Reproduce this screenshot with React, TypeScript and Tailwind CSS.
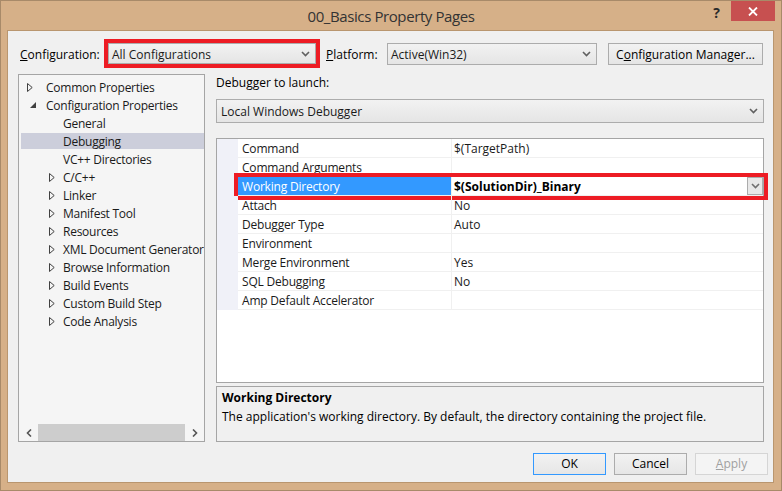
import React from "react";

function ChevronDown({ color = "#606060" }: { color?: string }) {
  return (
    <svg width="9" height="6" viewBox="0 0 9 6">
      <path d="M1 1 L4.5 4.5 L8 1" fill="none" stroke={color} strokeWidth="1.6" />
    </svg>
  );
}

function TriRight() {
  return (
    <svg width="6" height="9" viewBox="0 0 6 9">
      <path d="M0.5 0.5 L5.2 4.5 L0.5 8.5 Z" fill="none" stroke="#404040" strokeWidth="1" />
    </svg>
  );
}

function TriExpanded() {
  return (
    <svg width="6" height="6" viewBox="0 0 6 6">
      <path d="M6 0 L6 6 L0 6 Z" fill="#404040" />
    </svg>
  );
}

type TreeItem = { label: string; level: 0 | 1; kind: "collapsed" | "expanded" | "leaf"; selected?: boolean };

const tree: TreeItem[] = [
  { label: "Common Properties", level: 0, kind: "collapsed" },
  { label: "Configuration Properties", level: 0, kind: "expanded" },
  { label: "General", level: 1, kind: "leaf" },
  { label: "Debugging", level: 1, kind: "leaf", selected: true },
  { label: "VC++ Directories", level: 1, kind: "leaf" },
  { label: "C/C++", level: 1, kind: "collapsed" },
  { label: "Linker", level: 1, kind: "collapsed" },
  { label: "Manifest Tool", level: 1, kind: "collapsed" },
  { label: "Resources", level: 1, kind: "collapsed" },
  { label: "XML Document Generator", level: 1, kind: "collapsed" },
  { label: "Browse Information", level: 1, kind: "collapsed" },
  { label: "Build Events", level: 1, kind: "collapsed" },
  { label: "Custom Build Step", level: 1, kind: "collapsed" },
  { label: "Code Analysis", level: 1, kind: "collapsed" },
];

const props: { name: string; value: string; selected?: boolean }[] = [
  { name: "Command", value: "$(TargetPath)" },
  { name: "Command Arguments", value: "" },
  { name: "Working Directory", value: "$(SolutionDir)_Binary", selected: true },
  { name: "Attach", value: "No" },
  { name: "Debugger Type", value: "Auto" },
  { name: "Environment", value: "" },
  { name: "Merge Environment", value: "Yes" },
  { name: "SQL Debugging", value: "No" },
  { name: "Amp Default Accelerator", value: "" },
];

function TreeRow({ item }: { item: TreeItem }) {
  const content = (
    <>
      {item.level === 0 ? (
        <div className="w-[19px] flex items-center">
          {item.kind === "collapsed" ? <TriRight /> : <div className="ml-[3px] flex items-center"><TriExpanded /></div>}
        </div>
      ) : (
        <div className="w-[14px] flex items-center">{item.kind === "collapsed" ? <TriRight /> : null}</div>
      )}
      <span className="relative top-[1px] whitespace-nowrap tracking-[-0.25px]">{item.label}</span>
    </>
  );
  return (
    <div className="h-[18px] flex items-center">
      {item.selected ? (
        <div className="ml-[2px] flex-1 h-[16px] bg-[#cccedb] flex items-center pl-[28px]">{content}</div>
      ) : (
        <div className={item.level === 0 ? "flex items-center pl-[8px]" : "flex items-center pl-[30px]"}>{content}</div>
      )}
    </div>
  );
}

function Combo({ text, className }: { text: string; className: string }) {
  return (
    <div className={`flex items-center justify-between border border-[#acacac] bg-gradient-to-b from-[#f2f2f2] to-[#e5e5e5] pl-[3px] pr-[5px] ${className}`}>
      <span className="relative top-[1px] whitespace-nowrap">{text}</span>
      <ChevronDown />
    </div>
  );
}

function Button({ children, variant }: { children: React.ReactNode; variant?: "default" | "disabled" }) {
  const base = "w-[73px] h-[22px] flex items-center justify-center";
  if (variant === "default")
    return <div className={`${base} border border-[#3399ff] bg-gradient-to-b from-[#f2f2f2] to-[#e6e6e6] text-black`}>{children}</div>;
  if (variant === "disabled")
    return <div className={`${base} border border-[#d5d5d5] bg-[#f4f4f4] text-[#a0a0a0]`}>{children}</div>;
  return <div className={`${base} border border-[#acacac] bg-gradient-to-b from-[#f2f2f2] to-[#e6e6e6] text-black`}>{children}</div>;
}

export default function App() {
  return (
    <div className="w-[782px] h-[491px] bg-[#d6b088] border border-[#a88a69] flex flex-col font-['Open_Sans',sans-serif] text-[12px] text-[#1a1a1a] leading-none overflow-hidden">
      {/* Title bar */}
      <div className="h-[29px] flex items-start">
        <div className="flex-1" />
        <div className="pt-[8px] text-[15px] tracking-[-0.4px] text-[#333] whitespace-nowrap">00_Basics Property Pages</div>
        <div className="flex-1 flex justify-end items-start">
          <div className="mt-[5px] mr-[11px] text-[14px] font-bold text-[#2a2a2a]">?</div>
          <div className="w-[44px] h-[20px] bg-[#c75050] mr-[6px] flex items-center justify-center">
            <svg width="10" height="9" viewBox="0 0 10 9">
              <path d="M1 0.5 L9 8.5 M9 0.5 L1 8.5" stroke="#fff" strokeWidth="1.8" />
            </svg>
          </div>
        </div>
      </div>

      {/* Client */}
      <div className="ml-[6px] mr-[7px] h-[453px] border border-[#b9966f] bg-[#f0f0f0] flex flex-col">
        {/* Configuration row */}
        <div className="mt-[8px] h-[29px] flex items-center pl-[12px]">
          <div className="relative top-[1px] w-[84px] text-black">
            <span className="underline">C</span>onfiguration:
          </div>
          <div className="w-[216px] h-[29px] border-[4px] border-[#ed1c24]">
            <Combo text="All Configurations" className="h-full" />
          </div>
          <div className="relative top-[1px] ml-[6px] w-[61px] text-black">
            <span className="underline">P</span>latform:
          </div>
          <Combo text="Active(Win32)" className="w-[210px] h-[22px]" />
          <div className="ml-[11px] w-[155px] h-[22px] border border-[#acacac] bg-gradient-to-b from-[#f2f2f2] to-[#e5e5e5] flex items-center justify-center text-black">
            <span className="relative top-[1px]">
              C<span className="underline">o</span>nfiguration Manager...
            </span>
          </div>
        </div>

        {/* Main */}
        <div className="mt-[6px] flex items-start">
          {/* Tree */}
          <div className="ml-[10px] w-[187px] h-[368px] border border-[#a5a5a5] bg-[#f5f5f5] flex flex-col">
            <div className="flex-1 pt-[3px] overflow-hidden">
              {tree.map((t) => (
                <TreeRow key={t.label} item={t} />
              ))}
            </div>
            <div className="h-[17px] flex items-stretch">
              <div className="w-[19px] flex items-center justify-center">
                <svg width="6" height="8" viewBox="0 0 6 8">
                  <path d="M5 0.5 L1.5 4 L5 7.5" fill="none" stroke="#555" strokeWidth="1.6" />
                </svg>
              </div>
              <div className="w-[147px] bg-[#cdcdcd]" />
              <div className="flex-1 flex items-center justify-center">
                <svg width="6" height="8" viewBox="0 0 6 8">
                  <path d="M1 0.5 L4.5 4 L1 7.5" fill="none" stroke="#555" strokeWidth="1.6" />
                </svg>
              </div>
            </div>
          </div>

          {/* Right panel */}
          <div className="ml-[11px] w-[548px] flex flex-col">
            <div className="h-[16px] flex items-center text-black">
              <span className="relative top-[1px]">Debugger to launch:</span>
            </div>
            <Combo text="Local Windows Debugger" className="mt-[9px] h-[24px] pl-[4px]" />

            {/* Property grid */}
            <div className="mt-[15px] h-[245px] border border-[#a5a5a5] bg-white flex flex-col">
              {props.map((p) => (
                <div key={p.name} className="relative flex h-[19px]">
                  <div className="w-[21px] bg-[#f0f1f8]" />
                  {p.selected ? (
                    <>
                      <div className="w-[214px] border-b border-r border-[#f0f0f0] bg-[#3399ff] text-white pl-[4px] flex items-center whitespace-nowrap">
                        <span className="relative top-[1px] tracking-[-0.2px]">{p.name}</span>
                      </div>
                      <div className="flex-1 border-b border-[#f0f0f0] pl-[2px] flex items-center justify-between font-bold text-black">
                        <span className="relative top-[1px] whitespace-nowrap">{p.value}</span>
                        <div className="w-[16px] h-[18px] border border-[#acacac] bg-[#e8e8e8] flex items-center justify-center">
                          <ChevronDown color="#707070" />
                        </div>
                      </div>
                      <div className="absolute -top-[4px] -bottom-[4px] left-[17px] -right-[5px] border-[4px] border-[#ed1c24] pointer-events-none" />
                    </>
                  ) : (
                    <>
                      <div className="w-[214px] border-b border-r border-[#f0f0f0] pl-[4px] flex items-center whitespace-nowrap">
                        <span className="relative top-[1px] tracking-[-0.2px]">{p.name}</span>
                      </div>
                      <div className="flex-1 border-b border-[#f0f0f0] pl-[2px] flex items-center whitespace-nowrap">
                        <span className="relative top-[1px]">{p.value}</span>
                      </div>
                    </>
                  )}
                </div>
              ))}
            </div>

            {/* Description */}
            <div className="mt-[3px] h-[56px] border border-[#a5a5a5] bg-[#f0f0f0] px-[5px] pt-[4px] flex flex-col gap-[5px]">
              <div className="h-[13px] flex items-center font-bold text-black">Working Directory</div>
              <div className="h-[13px] flex items-center text-black whitespace-nowrap">
                <span className="relative top-[1px]">
                  The application's working directory. By default, the directory containing the project file.
                </span>
              </div>
            </div>
          </div>
        </div>

        {/* Buttons */}
        <div className="mt-[11px] flex justify-end gap-[8px] pr-[5px]">
          <Button variant="default">OK</Button>
          <Button>Cancel</Button>
          <Button variant="disabled">
            <span className="underline">A</span>pply
          </Button>
        </div>
      </div>
    </div>
  );
}
